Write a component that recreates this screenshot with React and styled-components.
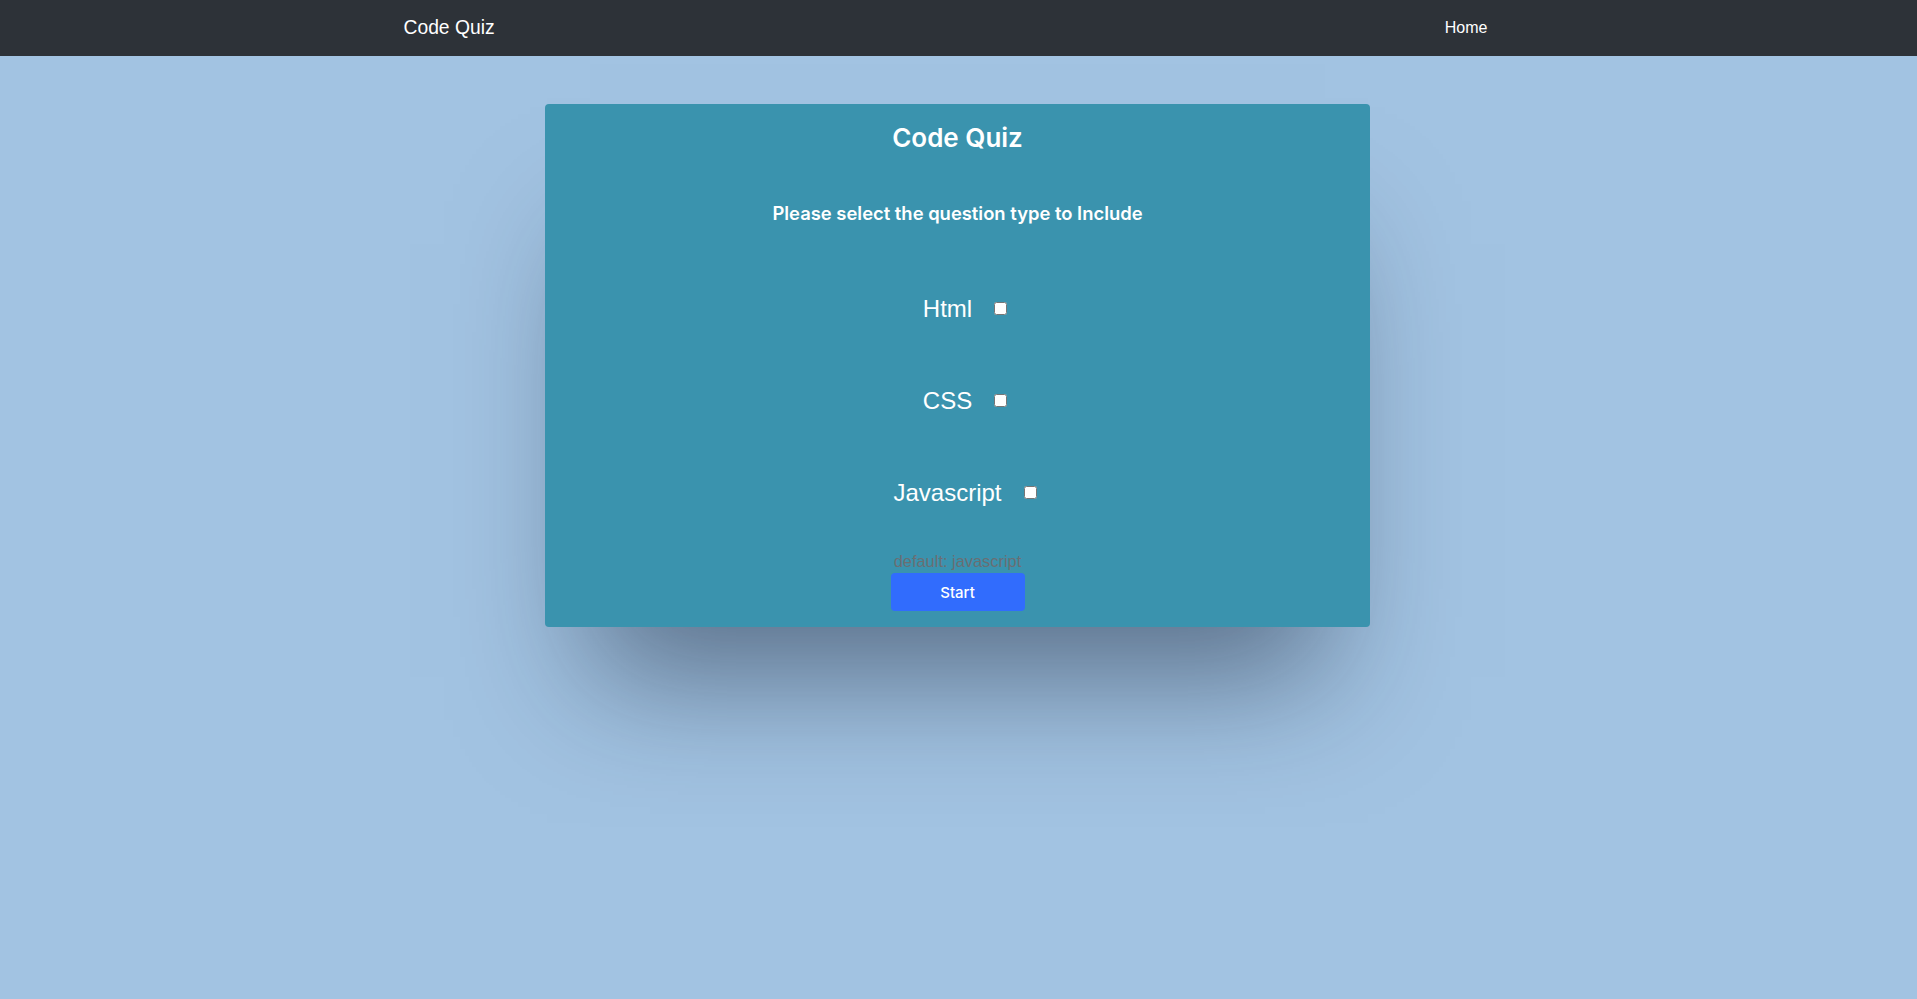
import React, { useState } from 'react';
import styled, { createGlobalStyle } from 'styled-components';

const GlobalStyle = createGlobalStyle`
  html, body {
    margin: 0;
    padding: 0;
    background: #a2c3e2;
    font-family: "Liberation Sans", Arial, sans-serif;
    min-height: 100%;
  }
`;

const TYPES = [
  { id: 'html', label: 'Html' },
  { id: 'css', label: 'CSS' },
  { id: 'javascript', label: 'Javascript' },
];

const App = () => {
  const [selected, setSelected] = useState({});

  const toggle = (id) => setSelected((s) => ({ ...s, [id]: !s[id] }));

  return (
    <>
      <GlobalStyle />
      <Navbar>
        <NavInner>
          <Brand href="#">Code Quiz</Brand>
          <NavLink href="#">Home</NavLink>
        </NavInner>
      </Navbar>

      <Page>
        <Card>
          <Title>Code Quiz</Title>
          <Subtitle>Please select the question type to Include</Subtitle>

          <TypeList>
            {TYPES.map((t) => (
              <TypeRow key={t.id}>
                <TypeLabel htmlFor={t.id}>{t.label}</TypeLabel>
                <Checkbox
                  id={t.id}
                  type="checkbox"
                  checked={!!selected[t.id]}
                  onChange={() => toggle(t.id)}
                />
              </TypeRow>
            ))}
          </TypeList>

          <Hint>default: javascript</Hint>
          <StartButton type="button">Start</StartButton>
        </Card>
      </Page>
    </>
  );
};

export default App;

// Styled Components

const Navbar = styled.nav`
  height: 56px;
  background: #2d3238;
  display: flex;
  align-items: center;
`;

const NavInner = styled.div`
  width: 1110px;
  margin: 0 auto;
  display: flex;
  align-items: center;
  justify-content: space-between;
  padding-left: 0;
  padding-right: 26px;
  box-sizing: border-box;
`;

const Brand = styled.a`
  color: #fff;
  font-size: 19.3px;
  text-decoration: none;
  line-height: 1;
`;

const NavLink = styled.a`
  color: #fff;
  font-size: 16px;
  text-decoration: none;
`;

const Page = styled.main`
  display: flex;
  justify-content: center;
  padding-top: 48px;
  padding-bottom: 200px;
  padding-right: 2px;
`;

const Card = styled.section`
  width: 825px;
  height: 523px;
  box-sizing: border-box;
  background: #3a93ae;
  border-radius: 4px;
  box-shadow: 0 95px 120px -45px rgba(20, 30, 50, 0.5);
  padding: 16px 16px 16px;
  display: flex;
  flex-direction: column;
  align-items: center;
  color: #fff;
`;

const Title = styled.h3`
  margin: 1px 0 0;
  font-family: Inter, "Liberation Sans", sans-serif;
  font-size: 26px;
  font-weight: 600;
  line-height: 34px;
`;

const Subtitle = styled.h5`
  margin: 46px 0 0;
  font-family: Inter, "Liberation Sans", sans-serif;
  font-size: 18.4px;
  font-weight: 600;
  line-height: 24px;
`;

const TypeList = styled.div`
  margin-top: 69px;
  display: flex;
  flex-direction: column;
  gap: 63px;
`;

const TypeRow = styled.div`
  display: flex;
  align-items: center;
  justify-content: center;
  height: 29px;
  padding-left: 18px;
`;

const TypeLabel = styled.label`
  font-size: 24px;
  line-height: 29px;
  color: #fff;
  margin-right: 18px;
`;

const Checkbox = styled.input`
  width: 13px;
  height: 13px;
  margin: 3px 3px 3px 4px;
`;

const Hint = styled.p`
  margin: 43px 0 0;
  font-size: 16.4px;
  line-height: 23px;
  color: #6a6e73;
`;

const StartButton = styled.button`
  width: 134px;
  height: 38px;
  border: none;
  border-radius: 4px;
  background: #316cfd;
  color: #fff;
  font-family: Inter, "Liberation Sans", sans-serif;
  font-size: 15px;
  font-weight: 500;
  cursor: pointer;
`;
